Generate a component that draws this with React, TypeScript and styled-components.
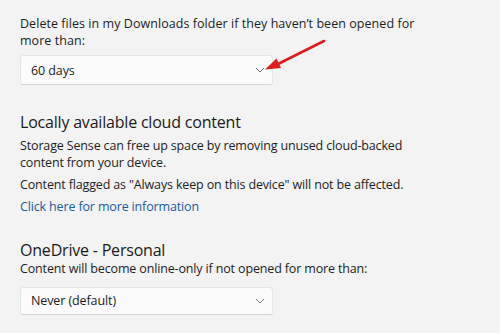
import React from "react";
import styled, { createGlobalStyle } from "styled-components";

const GlobalStyle = createGlobalStyle`
   html, body {
      margin: 0;
      padding: 0;
      background: #f3f3f3;
   }
   body {
      font-family: "Open Sans", "Noto Sans", sans-serif;
      color: #1b1b1b;
   }
`;

const Page = styled.div`
   position: relative;
   width: 500px;
   height: 333px;
   overflow: hidden;
   box-sizing: border-box;
   padding: 16px 0 0 20px;
   background: #f3f3f3;
`;

const Section = styled.div<{ $top?: number }>`
   display: flex;
   flex-direction: column;
   align-items: flex-start;
   margin-top: ${(p) => p.$top ?? 0}px;
`;

const Heading = styled.div`
   font-size: 16px;
   line-height: 22px;
   color: #1a1a1a;
   letter-spacing: -0.2px;
`;

const Text = styled.div<{ $gap?: number; $ls?: number }>`
   font-size: 12.5px;
   line-height: 16.5px;
   color: #1e1e1e;
   margin-top: ${(p) => p.$gap ?? 0}px;
   letter-spacing: ${(p) => p.$ls ?? -0.15}px;
   white-space: nowrap;
`;

const Link = styled.a`
   font-size: 12.5px;
   line-height: 16.5px;
   color: #1b5c9f;
   text-decoration: none;
   margin-top: 5px;
   letter-spacing: -0.15px;
   cursor: pointer;
`;

const Select = styled.div<{ $gap?: number; $h?: number }>`
   display: flex;
   align-items: center;
   justify-content: space-between;
   box-sizing: border-box;
   width: 253px;
   height: ${(p) => p.$h ?? 29}px;
   margin-top: ${(p) => p.$gap ?? 0}px;
   padding: 0 7px 0 10px;
   background: #fbfbfb;
   border: 1px solid #e6e6e6;
   border-bottom-color: #d4d4d4;
   border-radius: 3px;
   font-size: 12.5px;
   color: #1b1b1b;
   letter-spacing: -0.1px;
`;

const Chevron = () => (
   <svg width="10" height="6" viewBox="0 0 10 6">
      <path d="M1 1 L5 5 L9 1" fill="none" stroke="#777" strokeWidth="1" />
   </svg>
);

const Arrow = styled.svg`
   position: absolute;
   left: 0;
   top: 0;
   pointer-events: none;
`;

export default function App() {
   return (
      <>
         <GlobalStyle />
         <Page>
            <Section>
               <Text $ls={0.05}>
                  Delete files in my Downloads folder if they haven’t been opened for
                  <br />
                  more than:
               </Text>
               <Select $gap={6} $h={30}>
                  <span>60 days</span>
                  <Chevron />
               </Select>
            </Section>

            <Section $top={26}>
               <Heading>Locally available cloud content</Heading>
               <Text $gap={5}>
                  Storage Sense can free up space by removing unused cloud-backed
                  <br />
                  content from your device.
               </Text>
               <Text $gap={6}>Content flagged as "Always keep on this device" will not be affected.</Text>
               <Link>Click here for more information</Link>
            </Section>

            <Section $top={24}>
               <Heading>OneDrive - Personal</Heading>
               <Text>Content will become online-only if not opened for more than:</Text>
               <Select $gap={9} $h={28}>
                  <span>Never (default)</span>
                  <Chevron />
               </Select>
            </Section>

            <Arrow width="500" height="333" viewBox="0 0 500 333">
               <line x1="324" y1="41" x2="277" y2="64.5" stroke="#e01b1b" strokeWidth="2.6" strokeLinecap="round" />
               <polygon points="265,69.5 276.5,58.5 281,68" fill="#e01b1b" />
            </Arrow>
         </Page>
      </>
   );
}
